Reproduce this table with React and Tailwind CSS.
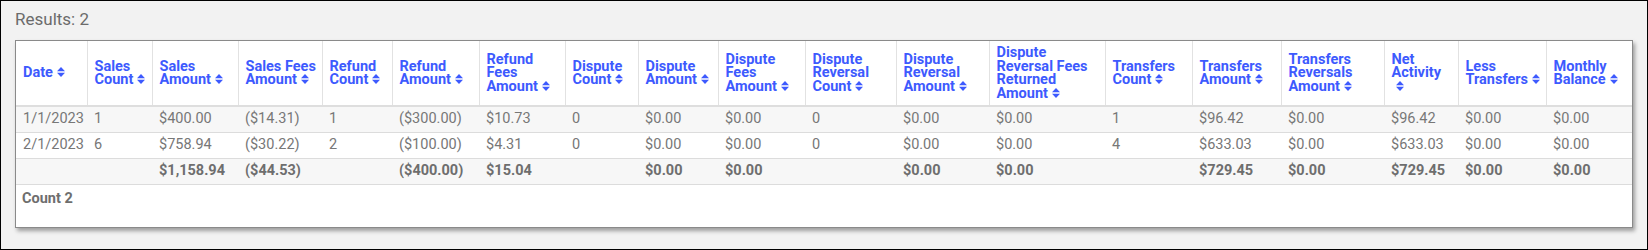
import React from 'react';

const columns = [
  { label: 'Date', w: 'w-[71px]' },
  { label: 'Sales Count', w: 'w-[65px]' },
  { label: 'Sales Amount', w: 'w-[86px]' },
  { label: 'Sales Fees Amount', w: 'w-[84px]' },
  { label: 'Refund Count', w: 'w-[70px]' },
  { label: 'Refund Amount', w: 'w-[87px]' },
  { label: 'Refund Fees Amount', w: 'w-[86px]' },
  { label: 'Dispute Count', w: 'w-[73px]' },
  { label: 'Dispute Amount', w: 'w-[80px]' },
  { label: 'Dispute Fees Amount', w: 'w-[87px]' },
  { label: 'Dispute Reversal Count', w: 'w-[91px]' },
  { label: 'Dispute Reversal Amount', w: 'w-[93px]' },
  { label: 'Dispute Reversal Fees Returned Amount', w: 'w-[116px]' },
  { label: 'Transfers Count', w: 'w-[87px]' },
  { label: 'Transfers Amount', w: 'w-[89px]' },
  { label: 'Transfers Reversals Amount', w: 'w-[103px]' },
  { label: 'Net Activity', w: 'w-[74px]' },
  { label: 'Less Transfers', w: 'w-[88px]' },
  { label: 'Monthly Balance', w: '' },
];

const rows = [
  ['1/1/2023', '1', '$400.00', '($14.31)', '1', '($300.00)', '$10.73', '0', '$0.00', '$0.00', '0', '$0.00', '$0.00', '1', '$96.42', '$0.00', '$96.42', '$0.00', '$0.00'],
  ['2/1/2023', '6', '$758.94', '($30.22)', '2', '($100.00)', '$4.31', '0', '$0.00', '$0.00', '0', '$0.00', '$0.00', '4', '$633.03', '$0.00', '$633.03', '$0.00', '$0.00'],
];

const totals = ['', '', '$1,158.94', '($44.53)', '', '($400.00)', '$15.04', '', '$0.00', '$0.00', '', '$0.00', '$0.00', '', '$729.45', '$0.00', '$729.45', '$0.00', '$0.00'];

const SortIcon = () => (
  <svg width="8" height="10" viewBox="0 0 8 10" className="inline-block align-baseline ml-[4px]">
    <path d="M4 0 L8 4.3 L0 4.3 Z" fill="currentColor" />
    <path d="M0 5.7 L8 5.7 L4 10 Z" fill="currentColor" />
  </svg>
);

export default function App() {
  return (
    <div
      className="h-[250px] w-[1648px] border border-black bg-[#f2f2f2] px-[14px] pt-[8px]"
      style={{ fontFamily: 'Roboto, "Liberation Sans", sans-serif' }}
    >
      <div className="text-[17px] leading-[21px] text-[#6b6b6b]">Results: 2</div>

      <div className="mt-[10px] h-[188px] bg-white border border-[#8a8a8a] shadow-[2px_3px_4px_rgba(0,0,0,0.35)]">
        <table className="w-full table-fixed border-collapse">
          <thead>
            <tr className="border-b-2 border-[#dedede]">
              {columns.map((c, i) => (
                <th
                  key={c.label}
                  className={`${c.w} h-[65px] pl-[7px] pr-[5px] text-left align-middle text-[14.5px] font-bold leading-[13.5px] text-[#3d5afe] ${
                    i < columns.length - 1 ? 'border-r border-[#e2e2e2]' : ''
                  }`}
                >
                  {c.label}
                  <SortIcon />
                </th>
              ))}
            </tr>
          </thead>
          <tbody className="text-[14.5px] text-[#777]">
            {rows.map((r, ri) => (
              <tr key={ri} className={`h-[26px] border-b border-[#dcdcdc] ${ri === 0 ? 'bg-[#f7f7f7]' : 'bg-white'}`}>
                {r.map((v, i) => (
                  <td key={i} className="px-[7px] whitespace-nowrap">
                    {v}
                  </td>
                ))}
              </tr>
            ))}
            <tr className="h-[26px] border-b border-[#dcdcdc] bg-[#f7f7f7] font-bold text-[#6e6e6e]">
              {totals.map((v, i) => (
                <td key={i} className="px-[7px] whitespace-nowrap">
                  {v}
                </td>
              ))}
            </tr>
          </tbody>
        </table>
        <div className="px-[6px] pt-[3px] text-[14.5px] font-bold text-[#6e6e6e]">Count 2</div>
      </div>
    </div>
  );
}
